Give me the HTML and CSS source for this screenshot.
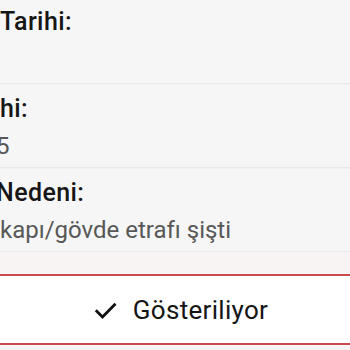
FILE: index.html
```html
<!DOCTYPE html>
<html lang="tr">
<head>
<meta charset="utf-8">
<link rel="stylesheet" href="styles.css">
</head>
<body>
<div class="page">
  <div class="list">
    <div class="row first">
      <div class="label">Tarihi:</div>
      <div class="value"></div>
    </div>
    <div class="row">
      <div class="label">hi:</div>
      <div class="value clip">5</div>
    </div>
    <div class="row">
      <div class="label clip">Nedeni:</div>
      <div class="value">kapı/gövde etrafı şişti</div>
    </div>
  </div>
  <div class="spacer"></div>
  <button class="toggle" type="button">
    <svg class="check" width="23" height="17" viewBox="0 0 23 17" aria-hidden="true">
      <path d="M1.8 8.2 L8.5 15 L21.5 1.8" fill="none" stroke="#111" stroke-width="2.8" stroke-linecap="butt" stroke-linejoin="miter"/>
    </svg>
    <span class="toggle-text">Gösteriliyor</span>
  </button>
</div>
</body>
</html>
```
FILE: styles.css
```css
html, body {
  margin: 0;
  padding: 0;
  height: 100%;
}
body {
  background: #f8f4f4;
  overflow: hidden;
  font-family: Roboto, "Noto Sans", "DejaVu Sans", sans-serif;
}
.page {
  display: flex;
  flex-direction: column;
}
.list {
  background: #f6f6f6;
}
.row {
  box-sizing: border-box;
  height: 84px;
  padding-top: 10px;
  border-bottom: 1px solid #e9e9e9;
  box-shadow: 0 1px 0 #f1f1f1;
  display: flex;
  flex-direction: column;
  gap: 7px;
}
.row.first {
  padding-top: 7px;
}
.label {
  font-size: 25px;
  line-height: 30px;
  font-weight: 500;
  color: #161616;
  letter-spacing: 0.4px;
}
.value {
  font-size: 24px;
  line-height: 30px;
  font-weight: 400;
  color: #585858;
  letter-spacing: 0;
  min-height: 30px;
}
.clip {
  margin-left: -4px;
}
.spacer {
  height: 22px;
  background: #f8f4f4;
}
.toggle {
  box-sizing: border-box;
  height: 71px;
  width: 100%;
  margin: 0;
  padding: 0 0 0 12px;
  background: #ffffff;
  border: none;
  border-top: 2px solid #c94d4d;
  border-bottom: 2px solid #c94d4d;
  display: flex;
  align-items: center;
  justify-content: center;
  gap: 16px;
  font-family: Roboto, "Noto Sans", "DejaVu Sans", sans-serif;
}
.check {
  display: block;
  margin-top: 2px;
}
.toggle-text {
  font-size: 26px;
  font-weight: 400;
  color: #151515;
  letter-spacing: 0.3px;
}
```
